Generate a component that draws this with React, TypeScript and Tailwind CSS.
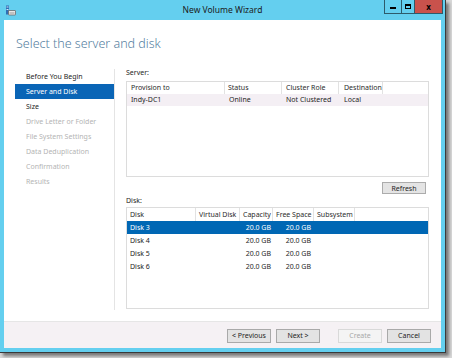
import React from 'react';

const steps = [
  { label: 'Before You Begin', state: 'done' },
  { label: 'Server and Disk', state: 'active' },
  { label: 'Size', state: 'done' },
  { label: 'Drive Letter or Folder', state: 'off' },
  { label: 'File System Settings', state: 'off' },
  { label: 'Data Deduplication', state: 'off' },
  { label: 'Confirmation', state: 'off' },
  { label: 'Results', state: 'off' },
];

const disks = ['Disk 3', 'Disk 4', 'Disk 5', 'Disk 6'];

const WizardIcon = () => (
  <svg width="11" height="11" viewBox="0 0 11 11">
    <rect x="1" y="0.5" width="3" height="9" fill="#2f6fb6" />
    <rect x="1.5" y="1.5" width="2" height="1" fill="#cfe4f7" />
    <rect x="1.5" y="4" width="2" height="1" fill="#cfe4f7" />
    <rect x="3.5" y="5.5" width="7" height="4.5" rx="0.5" fill="#e8e8e8" stroke="#6b6b6b" strokeWidth="0.8" />
    <rect x="4.5" y="7.5" width="5" height="1" fill="#9a9a9a" />
  </svg>
);

const Btn = ({ label, disabled = false }: { label: string; disabled?: boolean }) => (
  <div
    className={
      'w-[44px] h-[14px] flex items-center justify-center border ' +
      (disabled ? 'border-[#d9d9d9] bg-[#f4f4f4] text-[#a8a8a8]' : 'border-[#a9a9a9] bg-[#e3e3e3] text-[#1e1e1e]')
    }
  >
    {label}
  </div>
);

export default function App() {
  return (
    <div
      className="w-[452px] h-[358px] bg-[#d8d8d8] text-[7px] leading-none text-[#1e1e1e] overflow-hidden"
      style={{ fontFamily: '"Noto Sans", "Open Sans", sans-serif' }}
    >
      <div className="w-[446px] h-[353px] bg-[#64cfef] border-r border-b border-[#3a3a3a] flex flex-col shadow-[3px_3px_3px_rgba(0,0,0,0.45)]">
        {/* title bar */}
        <div className="h-[20px] flex items-start relative">
          <div className="pl-[5px] pt-[5px]">
            <WizardIcon />
          </div>
          <div className="absolute left-0 right-0 top-[6px] text-center text-[8.5px] text-[#1b1b1b]">New Volume Wizard</div>
          <div className="ml-auto mr-[2px] flex h-[14px] border border-[#2d5b6b] border-t-0">
            <div className="w-[17px] flex items-center justify-center border-r border-[#2d5b6b]">
              <div className="w-[6px] h-[2px] bg-black mt-[3px]" />
            </div>
            <div className="w-[13px] flex items-center justify-center border-r border-[#2d5b6b]">
              <div className="w-[6px] h-[5px] border border-black border-t-2" />
            </div>
            <div className="w-[27px] bg-[#c9524c] flex items-center justify-center text-[8px] font-bold text-black">x</div>
          </div>
        </div>

        {/* content */}
        <div className="mx-[4px] flex-1 bg-white flex flex-col">
          <div className="pl-[12px] pt-[17px] h-[49px] text-[12.5px] font-light text-[#55809f] leading-[14px]">
            Select the server and disk
          </div>

          <div className="flex flex-1">
            {/* nav */}
            <div className="w-[111px] pl-[11px] pt-[0px] border-r border-[#e4e4e4] mb-[11px]">
              {steps.map((s) => (
                <div
                  key={s.label}
                  className={
                    'h-[15px] leading-[15px] pl-[11px] ' +
                    (s.state === 'active'
                      ? 'bg-[#0a65b6] text-white'
                      : s.state === 'off'
                      ? 'text-[#b4b4b4]'
                      : 'text-[#1e1e1e]')
                  }
                >
                  {s.label}
                </div>
              ))}
            </div>

            {/* right panel */}
            <div className="ml-[11px] w-[303px] flex flex-col">
              <div className="h-[13px] leading-[10px] pl-[0px] -mt-[1px]">Server:</div>
              <div className="h-[96px] border border-[#dcdcdc]">
                <div className="flex h-[12px] leading-[12px] text-[#2b2b2b]">
                  <div className="w-[98px] pl-[4px] border-r border-[#e2e2e2]">Provision to</div>
                  <div className="w-[57px] pl-[3px] border-r border-[#e2e2e2]">Status</div>
                  <div className="w-[57px] pl-[4px] border-r border-[#e2e2e2]">Cluster Role</div>
                  <div className="w-[44px] pl-[5px] border-r border-[#e2e2e2]">Destination</div>
                </div>
                <div className="flex h-[12px] leading-[12px] bg-[#f4eff4]">
                  <div className="w-[98px] pl-[4px]">Indy-DC1</div>
                  <div className="w-[57px] pl-[4px]">Online</div>
                  <div className="w-[57px] pl-[4px]">Not Clustered</div>
                  <div className="w-[44px] pl-[5px]">Local</div>
                </div>
              </div>

              <div className="flex justify-end mt-[5px] pr-[3px]">
                <div className="w-[44px] h-[12px] flex items-center justify-center border border-[#acacac] bg-[#e4e4e4]">
                  Refresh
                </div>
              </div>

              <div className="h-[13px] leading-[13px] mt-[0px]">Disk:</div>
              <div className="h-[102px] border border-[#dcdcdc]">
                <div className="flex h-[13px] leading-[13px] text-[#2b2b2b]">
                  <div className="w-[69px] pl-[3px] border-r border-[#e2e2e2]">Disk</div>
                  <div className="w-[44px] pl-[3px] border-r border-[#e2e2e2]">Virtual Disk</div>
                  <div className="w-[33px] pl-[3px] border-r border-[#e2e2e2]">Capacity</div>
                  <div className="w-[41px] pl-[3px] border-r border-[#e2e2e2]">Free Space</div>
                  <div className="w-[41px] pl-[3px] border-r border-[#e2e2e2]">Subsystem</div>
                </div>
                {disks.map((d, i) => (
                  <div
                    key={d}
                    className={
                      'flex h-[13px] leading-[13px] ' + (i === 0 ? 'bg-[#0067b4] text-white' : '')
                    }
                  >
                    <div className="w-[69px] pl-[3px]">{d}</div>
                    <div className="w-[44px]" />
                    <div className="w-[33px] text-right pr-[2px]">20.0 GB</div>
                    <div className="w-[41px] text-right pr-[3px]">20.0 GB</div>
                  </div>
                ))}
              </div>
            </div>
          </div>

          {/* footer */}
          <div className="h-[27px] border-t border-[#e6e6e6] bg-[#f5f1f4] flex items-center justify-end pr-[10px] pt-[1px]">
            <Btn label="< Previous" />
            <div className="w-[5px]" />
            <Btn label="Next >" />
            <div className="w-[18px]" />
            <Btn label="Create" disabled />
            <div className="w-[5px]" />
            <Btn label="Cancel" />
          </div>
        </div>
        <div className="h-[4px]" />
      </div>
    </div>
  );
}
